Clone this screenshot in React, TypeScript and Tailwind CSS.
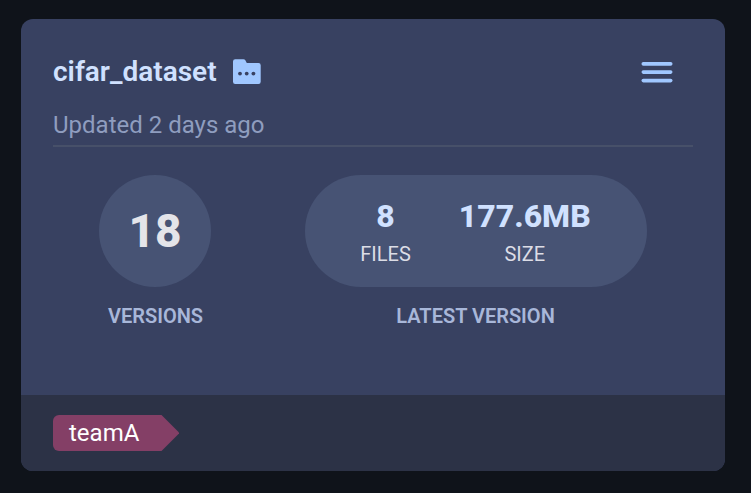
import React from "react";

function FolderIcon() {
  return (
    <svg className="ml-4 h-7 w-7" viewBox="0 0 28 28">
      <path d="M2.2 1.2h8.3c.8 0 1.3.3 1.7.9l1.6 2.9h11.7a2.2 2.2 0 0 1 2.2 2.2v16.6a2.2 2.2 0 0 1-2.2 2.2H2.2a2.2 2.2 0 0 1-2.2-2.2V3.4a2.2 2.2 0 0 1 2.2-2.2z" fill="#a0c7ff" />
      <g fill="#384161">
        <circle cx="7" cy="15.6" r="1.9" />
        <circle cx="13.7" cy="15.6" r="1.9" />
        <circle cx="20.4" cy="15.6" r="1.9" />
      </g>
    </svg>
  );
}

function MenuIcon() {
  return (
    <svg className="mr-5 ml-auto h-[22px] w-8" viewBox="0 0 32 22" fill="#a0c7ff">
      <rect x="0.5" y="1" width="31" height="3.7" rx="1.8" />
      <rect x="0.5" y="9.2" width="31" height="3.7" rx="1.8" />
      <rect x="0.5" y="17.7" width="31" height="3.7" rx="1.8" />
    </svg>
  );
}

export default function App() {
  return (
    <div className="h-[493px] w-[751px] bg-[#0f131a] pt-[19px] pl-[21px] font-['Roboto',sans-serif]">
      <div className="flex h-[452px] w-[704px] flex-col overflow-hidden rounded-xl bg-[#384161]">
        <div className="flex h-[376px] flex-col px-8">
          <header className="flex h-[128px] flex-col border-b-2 border-[#475069] pt-[37px]">
            <div className="flex h-8 items-center">
              <h1 className="text-[28px] leading-8 font-semibold text-[#d0e1ff]">cifar_dataset</h1>
              <FolderIcon />
              <MenuIcon />
            </div>
            <p className="mt-[21px] text-2xl leading-8 text-[#8f9dbf]">Updated 2 days ago</p>
          </header>
          <div className="flex pt-7">
            <div className="ml-[46px] flex w-[112px] flex-col items-center">
              <div className="flex size-28 items-center justify-center rounded-full bg-[#475374] text-[46px] font-extrabold text-[#e4e4e9]">18</div>
              <span className="mt-[17px] pl-px text-xl leading-6 font-semibold text-[#a8b7d9]">VERSIONS</span>
            </div>
            <div className="ml-[94px] flex w-[342px] flex-col items-center">
              <div className="flex h-28 w-full justify-center gap-12 rounded-full bg-[#475374] pt-[23px] pr-px text-center">
                <div>
                  <div className="text-[32px] leading-9 font-extrabold text-[#d0e1ff]">8</div>
                  <div className="mt-2 text-xl leading-6 text-[#dcdde6]">FILES</div>
                </div>
                <div>
                  <div className="text-[32px] leading-9 font-extrabold text-[#d0e1ff]">177.6MB</div>
                  <div className="mt-2 text-xl leading-6 text-[#dcdde6]">SIZE</div>
                </div>
              </div>
              <span className="mt-[17px] pr-px text-xl leading-6 font-semibold text-[#a8b7d9]">LATEST VERSION</span>
            </div>
          </div>
        </div>
        <footer className="flex h-[76px] bg-[#2c3246] px-8 pt-5">
          <div className="flex h-9">
            <span className="w-[108px] rounded-l-md bg-[#843f66] pl-4 text-2xl leading-9 text-white">teamA</span>
            <svg className="h-9 w-[18px]" viewBox="0 0 18 36"><path d="M0 0h.5L18.5 18L.5 36H0z" fill="#843f66" /></svg>
          </div>
        </footer>
      </div>
    </div>
  );
}
